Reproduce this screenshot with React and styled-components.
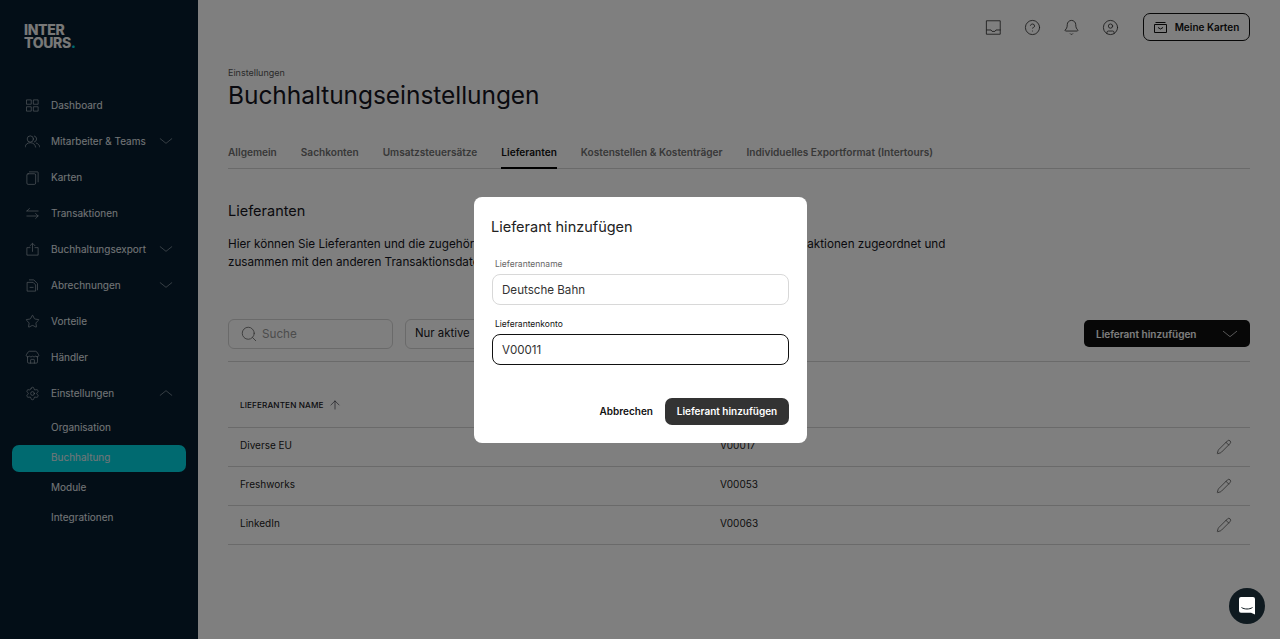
import React from "react";
import styled, { createGlobalStyle } from "styled-components";
import { Star, Store, Settings, CircleHelp, Bell, CircleUser, Search, ArrowUp, Pencil } from "lucide-react";

const Global = createGlobalStyle`
  html, body { margin: 0; padding: 0; height: 100%; overflow: hidden; background: #fff; }
  * { box-sizing: border-box; }
  body { font-family: Inter, "Liberation Sans", sans-serif; color: #141420; }
`;
const Page = styled.div`display: flex; height: 639px; width: 1280px;`;
const Sidebar = styled.aside`
  width: 198px; flex: none; background: #061c2f; color: #e6ecf0;
  padding: 23px 12px 0; display: flex; flex-direction: column;
`;
const Logo = styled.div`
  font: 800 14px/13px Inter, sans-serif; letter-spacing: -0.3px; color: #f0f0f0; padding-left: 12px; height: 64px;
  span { color: #00d4e0; }
`;
const Nav = styled.nav`display: flex; flex-direction: column;`;
const NavItem = styled.div`
  height: 36px; display: flex; align-items: center; padding: 0 13px 0 13px; font-size: 10px;
  svg.lead { width: 15px; height: 15px; margin-right: 11px; flex: none; stroke-width: 1; opacity: .8; }
  svg.caret { margin-left: auto; width: 14px; height: 14px; stroke-width: 1; opacity: .8; }
`;
const SubList = styled.div`display: flex; flex-direction: column; margin-top: 1px;`;
const SubItem = styled.div`
  height: ${p => (p.$active ? "27px" : "30px")}; display: flex; align-items: center; padding-left: 39px; font-size: 10px;
  ${p => p.$active && "margin-top: 3px; padding-bottom: 3px; border-radius: 7px; background: #00d4e0;"}
`;
const Main = styled.main`flex: 1; padding: 13px 30px 0; min-width: 0;`;
const TopBar = styled.div`display: flex; justify-content: flex-end; align-items: center; height: 28px; color: #333;`;
const TopIcon = styled.div`
  width: 39px; display: flex; justify-content: center; svg { width: 17px; height: 17px; stroke-width: 1.2; }
`;
const CardsButton = styled.button`
  margin-left: 13.5px; width: 107px; height: 28px; border: 1px solid #111; border-radius: 7px; background: transparent;
  display: flex; align-items: center; justify-content: center; gap: 8px; font: 600 10px Inter, sans-serif; color: #111;
`;
const Crumb = styled.div`font-size: 9px; color: #555; margin-top: 26px; line-height: 11px;`;
const Title = styled.h1`margin: 2px 0 0; font-size: 24.5px; font-weight: 400; line-height: 30px; letter-spacing: -0.05px;`;
const Tabs = styled.div`display: flex; gap: 24px; border-bottom: 1px solid #d4d4d4; margin-top: 26px; height: 33px;`;
const Tab = styled.div`
  font-size: 10.1px; font-weight: 600; height: 33px; padding-top: 10px; white-space: nowrap;
  color: ${p => (p.$active ? "#111" : "#707070")};
  border-bottom: ${p => (p.$active ? "2px solid #000" : "0")};
`;
const SectionTitle = styled.h2`margin: 33px 0 0; font-size: 14.5px; font-weight: 400; line-height: 18px;`;
const Para = styled.p`margin: 15px 0 0; font-size: 11.7px; line-height: 18px; white-space: nowrap;`;
const Toolbar = styled.div`display: flex; align-items: center; margin-top: 48px; padding-bottom: 12px; border-bottom: 1px solid #d4d4d4; height: 43px;`;
const SearchBox = styled.div`
  width: 165px; height: 30px; border: 1px solid #d4d4d4; border-radius: 6px; display: flex; align-items: center; gap: 4px; padding-left: 11px;
  font-size: 11.7px; color: #999; svg { width: 18px; height: 18px; stroke-width: 1.1; color: #666; }
`;
const Select = styled.div`
  margin-left: 12px; width: 200px; height: 30px; border: 1px solid #d4d4d4; border-radius: 6px; display: flex; align-items: center; padding: 0 0 2px 9px; font-size: 11.4px;
`;
const AddButton = styled.button`
  margin: 0 0 1px auto; width: 166px; height: 27px; background: #0e0e0e; color: #fff; border: 0; border-radius: 5px; display: flex; align-items: center; justify-content: space-between;
  padding: 0 12px; font: 600 10px Inter, sans-serif; svg { width: 16px; height: 16px; stroke-width: 1; }
`;
const Head = styled.div`
  display: grid; grid-template-columns: 480px 1fr; align-items: center; height: 66px; padding-left: 12px; border-bottom: 1px solid #d4d4d4; padding-top: 21px;
  font-size: 8.2px; font-weight: 500; letter-spacing: .1px;
  span { display: flex; align-items: center; gap: 4px; } svg { width: 14px; height: 14px; stroke-width: 1; }
`;
const Row = styled.div`
  display: grid; grid-template-columns: 480px 1fr 40px; align-items: center; height: 39px; padding-left: 12px; border-bottom: 1px solid #d4d4d4; font-size: 10px; color: #222;
  > div { padding-bottom: 5px; }
  svg { width: 16px; height: 16px; stroke-width: 1; color: #333; transform: translateX(6px); }
`;
const Overlay = styled.div`
  position: fixed; inset: 0; background: rgba(0,0,0,.5); display: flex; align-items: center; justify-content: center; padding-left: 1px;
`;
const Modal = styled.div`
  width: 333px; height: 246px; background: #fff; border-radius: 8px; padding: 20px 18px 18px 17px; display: flex; flex-direction: column;
`;
const ModalTitle = styled.h3`margin: 0 0 21px; font-size: 14.5px; font-weight: 400; line-height: 20px; color: #222;`;
const Label = styled.div`
  font-size: 8.5px; line-height: 12px; padding-left: 4px; margin-bottom: 4px; color: ${p => (p.$focus ? "#111" : "#666")};
`;
const Field = styled.div`
  height: 31px; border-radius: 8px; display: flex; align-items: center; padding: 2px 0 0 9px; font-size: 11.6px; color: #333; margin-bottom: 13px; margin-left: 1px;
  border: 1px solid ${p => (p.$focus ? "#111" : "#d8d8d8")};
`;
const Actions = styled.div`margin-top: auto; display: flex; justify-content: flex-end; align-items: center; gap: 12px;`;
const Cancel = styled.button`background: none; border: 0; padding: 0; font: 600 10px Inter, sans-serif; color: #111;`;
const Confirm = styled.button`
  width: 124px; height: 27px; background: #333; color: #fff; border: 0; border-radius: 7px; font: 600 10px Inter, sans-serif;
`;
const Chat = styled.div`
  position: fixed; left: 1229px; top: 588px; width: 36px; height: 36px; border-radius: 50%; background: #0f1a20; display: flex; align-items: center; justify-content: center;
`;

const Ic = ({ children, className }) => (
  <svg className={className} viewBox="0 0 24 24" fill="none" stroke="currentColor" strokeLinecap="round" strokeLinejoin="round">{children}</svg>
);
const Down = () => <Ic className="caret"><path d="M2 8l10 8 10-8" /></Ic>;
const Up = () => <Ic className="caret"><path d="M2 16l10-8 10 8" /></Ic>;
const nav = [
  ["Dashboard", <Ic className="lead"><path d="M3 3h7v7H3zM14 3h7v7h-7zM3 14h7v7H3zM14 14h7v7h-7z" /></Ic>],
  ["Mitarbeiter & Teams", <Ic className="lead"><circle cx="8.5" cy="8" r="5" /><path d="M0 21c1-5 4-7 8.5-7s7.5 2 8.5 7M15 3.2a5 5 0 0 1 0 9.6M18 14.5c3 1 5 3 6 6.5" /></Ic>, true],
  ["Karten", <Ic className="lead"><rect x="3" y="6" width="14" height="17" rx="2" /><path d="M7 3h13a1 1 0 0 1 1 1v15" /></Ic>],
  ["Transaktionen", <Ic className="lead"><path d="M21 8H3M7 4L3 8M3 16h18M17 12l4 4-4 4" /></Ic>, false],
  ["Buchhaltungsexport", <Ic className="lead"><path d="M8 9H3v12h18V9h-5M12 15V3M8 6l4-4 4 4" /></Ic>, true],
  ["Abrechnungen", <Ic className="lead"><path d="M4 7h9l4 4v10H4zM7 3h7l6 6v10M8 15h5" /></Ic>, true],
  ["Vorteile", <Star className="lead" />],
  ["Händler", <Store className="lead" />],
];
const rows = [["Diverse EU", "V00017"], ["Freshworks", "V00053"], ["LinkedIn", "V00063"]];
const tabs = ["Allgemein", "Sachkonten", "Umsatzsteuersätze", "Lieferanten", "Kostenstellen & Kostenträger", "Individuelles Exportformat (Intertours)"];

export default function App() {
  return (
    <Page>
      <Global />
      <Sidebar>
        <Logo>INTER<br />TOURS<span>.</span></Logo>
        <Nav>
          {nav.map(([label, icon, caret]) => (
            <NavItem key={label}>{icon}{label}{caret && <Down />}</NavItem>
          ))}
          <NavItem><Settings className="lead" />Einstellungen<Up /></NavItem>
          <SubList>
            <SubItem>Organisation</SubItem>
            <SubItem $active>Buchhaltung</SubItem>
            <SubItem>Module</SubItem>
            <SubItem>Integrationen</SubItem>
          </SubList>
        </Nav>
      </Sidebar>
      <Main>
        <TopBar>
          <TopIcon><Ic><path d="M2.5 2.5h19v19h-19zM2.5 15.5h6l1.5 2h4l1.5-2h6" /></Ic></TopIcon>
          <TopIcon><CircleHelp /></TopIcon>
          <TopIcon><Bell /></TopIcon>
          <TopIcon><CircleUser /></TopIcon>
          <CardsButton>
            <svg width="13" height="11" viewBox="0 0 13 11" fill="none" stroke="#111"><path d="M.5 2.5h12v8H.5zM1.5.5h10M4 5.5l2.5 1.5L9 5.5" /></svg>
            Meine Karten
          </CardsButton>
        </TopBar>
        <Crumb>Einstellungen</Crumb>
        <Title>Buchhaltungseinstellungen</Title>
        <Tabs>{tabs.map(t => <Tab key={t} $active={t === "Lieferanten"}>{t}</Tab>)}</Tabs>
        <SectionTitle>Lieferanten</SectionTitle>
        <Para>
          Hier können Sie Lieferanten und die zugehörigen Lieferantenkonten hinterlegen. Diese werden den Transaktionen zugeordnet und<br />
          zusammen mit den anderen Transaktionsdaten exportiert.
        </Para>
        <Toolbar>
          <SearchBox><Search />Suche</SearchBox>
          <Select>Nur aktive</Select>
          <AddButton>Lieferant hinzufügen<Ic><path d="M2 8l10 8 10-8" /></Ic></AddButton>
        </Toolbar>
        <Head><span>LIEFERANTEN NAME <ArrowUp /></span></Head>
        {rows.map(([n, k]) => (
          <Row key={n}><div>{n}</div><div>{k}</div><Pencil /></Row>
        ))}
      </Main>
      <Overlay>
        <Modal>
          <ModalTitle>Lieferant hinzufügen</ModalTitle>
          <Label>Lieferantenname</Label>
          <Field>Deutsche Bahn</Field>
          <Label $focus>Lieferantenkonto</Label>
          <Field $focus>V00011</Field>
          <Actions>
            <Cancel>Abbrechen</Cancel>
            <Confirm>Lieferant hinzufügen</Confirm>
          </Actions>
        </Modal>
      </Overlay>
      <Chat>
        <svg width="18" height="18" viewBox="0 0 18 18"><path d="M3 0h12a2 2 0 0 1 2 2v15.5l-4-1.8H3a2 2 0 0 1-2-2V2a2 2 0 0 1 2-2z" fill="#fff" /><path d="M3.5 10.5c3 2 8 2 11 0" fill="none" stroke="#0f1a20" strokeWidth="1" /></svg>
      </Chat>
    </Page>
  );
}
